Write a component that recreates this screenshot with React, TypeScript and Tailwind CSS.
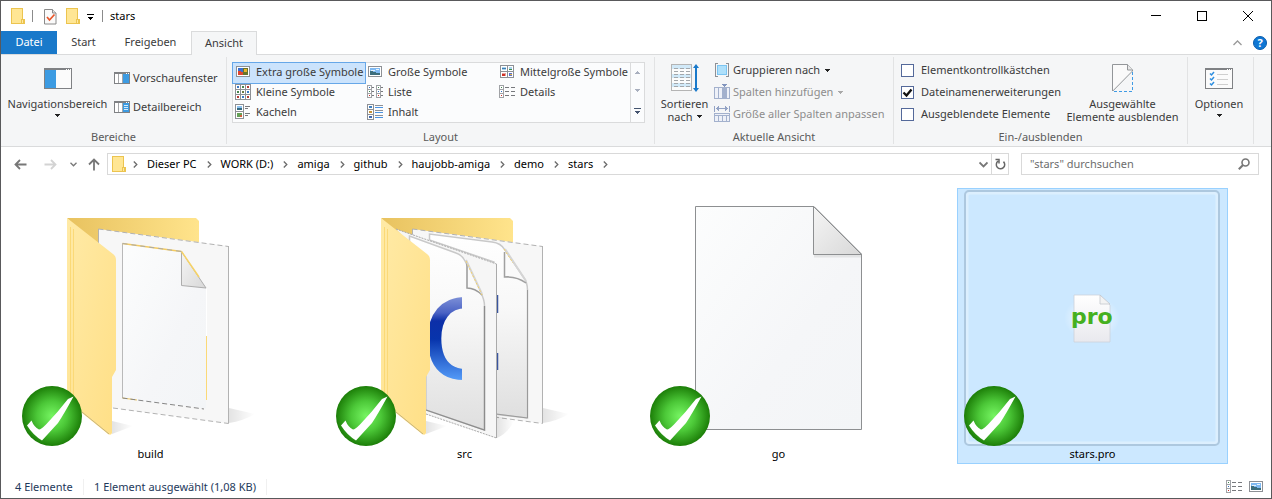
import React from "react";

type Children = { children?: React.ReactNode };

/* ---------- small glyphs ---------- */

const FolderIcon = () => (
  <svg width="14" height="17" viewBox="0 0 14 17" shapeRendering="crispEdges">
    <path d="M.5.5h10.5v11h2v4H.5z" fill="#ffe694" stroke="#ecc44f" />
    <path d="M10.5 15.5v-4h2v4z" fill="#ffe9a2" stroke="#ecc44f" />
  </svg>
);

const PropertiesIcon = () => (
  <svg width="13" height="17" viewBox="0 0 13 17">
    <path d="M.5 1.500h8l3.500 3.500v11H.5z" fill="#fafafa" stroke="#8a8a8a" />
    <path d="M8.500 1.500V5H12" fill="#e3e3e3" stroke="#8a8a8a" />
    <path d="M3 9l2.500 3L10.500 6.500" fill="none" stroke="#e8562a" strokeWidth="1.700" />
  </svg>
);

const Caret = ({ className = "fill-[#222]" }: { className?: string }) => (
  <svg width="5" height="3" viewBox="0 0 5 3" className={className} shapeRendering="crispEdges">
    <path d="M0 0h5v1H4v1H3v1H2V2H1V1H0z" />
  </svg>
);

const Chevron = () => (
  <svg width="5" height="7" viewBox="0 0 5 7" fill="none" stroke="#6b6b6b" strokeWidth="1.300">
    <path d="M.8.5l3 3-3 3" />
  </svg>
);

const WindowFrame = ({ children }: Children) => (
  <svg width="28" height="21" viewBox="0 0 28 21" shapeRendering="crispEdges">
    <rect x=".5" y=".5" width="27" height="20" fill="#fbfbfb" stroke="#7f8184" />
    <path d="M0 1h28" stroke="#7f8184" strokeWidth="2" />
    <path d="M22 1.500h1M24 1.500h1M26 1.500h1" stroke="#fff" />
    {children}
  </svg>
);

const NavPaneIcon = () => (
  <WindowFrame>
    <rect x="1" y="2" width="11" height="18" fill="#3c9be2" />
  </WindowFrame>
);

const OptionsIcon = () => (
  <WindowFrame>
    <path d="M12 6.500h11M12 11.500h11M12 16.500h11" stroke="#cfcfcf" />
    <g fill="none" stroke="#2f8fe0" strokeWidth="1.500" shapeRendering="auto">
      <path d="M5 5.500l1.500 1.500L9 4M5 10.500L6.500 12 9 9M5 15.500L6.500 17 9 14" />
    </g>
  </WindowFrame>
);

const PaneIcon = ({ detail = false }: { detail?: boolean }) => (
  <svg width="16" height="12" viewBox="0 0 16 12" shapeRendering="crispEdges">
    <rect x=".5" y=".5" width="15" height="11" fill="#fff" stroke="#7f8184" />
    <path d="M0 1h16" stroke="#7f8184" strokeWidth="2" />
    <path d="M12 1.500h1M14 1.500h1" stroke="#fff" />
    <path d="M4.500 2v9M8.500 2v9" stroke="#a5a7aa" />
    <rect x="9" y="2" width="6" height="9" fill="#3c9be2" />
    {detail && <path d="M10 4.500h4M10 6.500h4M10 8.500h4" stroke="#d5ebfb" />}
  </svg>
);

const PictureIcon = ({ vivid = false }: { vivid?: boolean }) => (
  <svg width="16" height="16" viewBox="0 0 16 16" shapeRendering="crispEdges">
    <rect x="1.500" y="2.500" width="13" height="10" fill="#fff" stroke="#8d9095" />
    {vivid ? (
      <>
        <path d="M3 4h10v7H3z" fill="#3b6fd0" />
        <path d="M3 7h3v1h2v3H3z" fill="#e2452e" />
        <path d="M8 4h5v7H8z" fill="#67742b" />
        <path d="M9 5h3v3H9z" fill="#e9b22c" />
      </>
    ) : (
      <>
        <path d="M3 4h10v7H3z" fill="#7fb9f2" />
        <path d="M4 6h4v1H4zM9 5h3v1H9z" fill="#e5f2fd" />
        <path d="M3 7h3v1h3v1h4v2H3z" fill="#3b6d7c" />
      </>
    )}
  </svg>
);

const MediumIcon = () => (
  <svg width="16" height="16" viewBox="0 0 16 16" shapeRendering="crispEdges">
    <path d="M1.500 1.500h13v12h-13zM8.500 1.500v12M1.500 7.500h13" fill="#fff" stroke="#8d9095" />
    <path d="M3 3h4v3H3z" fill="#a9d2ee" />
    <path d="M3 4h4v1H3z" fill="#3c7fb4" />
    <path d="M10 3h3v3h-3z" fill="#a9d2ee" />
    <path d="M10 5h3v1h-3z" fill="#3d8a4c" />
    <path d="M3 9h4v3H3z" fill="#e8a09a" />
    <path d="M3 10h3v2H3z" fill="#cf3127" />
    <path d="M10 9h3v3h-3z" fill="#5a6fd0" />
    <path d="M11 10h2v1h-2z" fill="#e5b431" />
  </svg>
);

const SmallIcon = () => (
  <svg width="16" height="16" viewBox="0 0 16 16" shapeRendering="crispEdges">
    <path d="M.5.5h15v15H.5zM5.500.5v15M10.500.5v15M.5 5.500h15M.5 10.500h15" fill="#fff" stroke="#8d9095" />
    <path d="M2 3h2M12 8h2M7 13h2" stroke="#3b78c4" strokeWidth="2" />
    <path d="M7 3h2M2 8h2" stroke="#47864f" strokeWidth="2" />
    <path d="M12 3h2M2 13h2M12 13h2" stroke="#b53a35" strokeWidth="2" />
    <path d="M7 8h2" stroke="#6d7842" strokeWidth="2" />
  </svg>
);

const ListIcon = () => (
  <svg width="16" height="16" viewBox="0 0 16 16" shapeRendering="crispEdges">
    <path d="M.5 1.500h4v12h-4zM.5 5.500h4M.5 9.500h4M9.500 1.500h4v12h-4zM9.500 5.500h4M9.500 9.500h4" fill="#fff" stroke="#a0a2a6" />
    <path d="M5 3.500h2M5 7.500h2M5 11.500h2M14 3.500h2M14 7.500h2M14 11.500h2" stroke="#77797d" />
    <path d="M2 3.500h1M11 7.500h1" stroke="#2c70c4" />
    <path d="M2 7.500h1M11 3.500h1" stroke="#3e8750" />
    <path d="M2 11.500h1M11 11.500h1" stroke="#c92f2a" />
  </svg>
);

const DetailsIcon = () => (
  <svg width="16" height="16" viewBox="0 0 16 16" shapeRendering="crispEdges">
    <path d="M.5 1.500h4v12h-4zM.5 5.500h4M.5 9.500h4" fill="#fff" stroke="#a0a2a6" />
    <path d="M6 3.500h4M12 3.500h4M6 7.500h4M12 7.500h4M6 11.500h4M12 11.500h4" stroke="#77797d" />
    <path d="M2 3.500h1" stroke="#3e8750" />
    <path d="M2 7.500h1" stroke="#2c70c4" />
    <path d="M2 11.500h1" stroke="#c92f2a" />
  </svg>
);

const TilesIcon = () => (
  <svg width="16" height="16" viewBox="0 0 16 16" shapeRendering="crispEdges">
    <path d="M.5.5h8v14h-8zM.5 7.500h8" fill="#fff" stroke="#8d9095" />
    <path d="M2 2h5v2H2z" fill="#8cc1ef" />
    <path d="M2 4h5v2H2z" fill="#356a80" />
    <path d="M2 9h5v4H2z" fill="#65a057" />
    <path d="M5 11h2v2H5z" fill="#d2603c" />
    <path d="M10 2.500h5M10 4.500h3M10 9.500h5M10 11.500h3" stroke="#77797d" />
  </svg>
);

const ContentIcon = () => (
  <svg width="16" height="16" viewBox="0 0 16 16" shapeRendering="crispEdges">
    <path d="M.5.5h6v15h-6zM.5 5.500h6M.5 10.500h6" fill="#fff" stroke="#8d9095" />
    <path d="M2 3h3" stroke="#3d7fc0" strokeWidth="2" />
    <path d="M2 8h3" stroke="#c69236" strokeWidth="2" />
    <path d="M2 13h3" stroke="#3d68b0" strokeWidth="2" />
    <path d="M8 3.500h8M8 8.500h8M8 13.500h8" stroke="#4a94e4" />
    <path d="M8 1.500h8M8 6.500h8M8 11.500h8" stroke="#8d9095" />
  </svg>
);

const SortIcon = () => (
  <svg width="28" height="28" viewBox="0 0 28 28">
    <g shapeRendering="crispEdges">
      <rect x=".5" y=".5" width="20" height="26" fill="#fcfcfc" stroke="#b4b4b4" />
      <path d="M1 3h19M1 12h19M1 21h19" stroke="#d1e9f8" strokeWidth="4" />
      <g stroke="#a3a7ab" strokeDasharray="4 2">
        <path d="M3 4.500h16M3 7.500h16M3 10.500h16M3 13.500h16M3 16.500h16M3 19.500h16M3 22.500h16" />
      </g>
    </g>
    <path d="M25 2v24" stroke="#1979ca" strokeWidth="2" />
    <path d="M22 4l3-4 3 4zM22 24l3 4 3-4z" fill="#1979ca" />
  </svg>
);

const GroupIcon = () => (
  <svg width="16" height="16" viewBox="0 0 16 16" shapeRendering="crispEdges">
    <path d="M4 1.500H1.500v13H4M12 1.500h2.500v13H12" fill="none" stroke="#8d9095" />
    <rect x="3.500" y="3.500" width="9" height="9" fill="#aee0fb" stroke="#7cc5f2" />
  </svg>
);

const AddColumnIcon = () => (
  <svg width="16" height="16" viewBox="0 0 16 16" shapeRendering="crispEdges">
    <path d="M.5 3.500h15v11H.5z" fill="#eef1f8" stroke="#a3b1cd" />
    <path d="M4.500 4v10M8.500 4v10M12.500 4v10" stroke="#a3b1cd" />
    <path d="M8 4h4v10H8z" fill="#a3b1cd" />
    <path d="M8 0h5v1h-1v1h-1v1h-1V2H9V1H8z" fill="#8194bd" />
  </svg>
);

const SizeColumnsIcon = () => (
  <svg width="16" height="16" viewBox="0 0 16 16" shapeRendering="crispEdges">
    <path d="M.5 0v6M15.500 0v6M2 2.500h12M3.500 1v3M4.500 0v5M11.500 0v5M12.500 1v3" stroke="#93a3c5" />
    <path d="M.5 7.500h15v8H.5z" fill="#eef1f8" stroke="#a3b1cd" />
    <path d="M.5 9.500h15M4.500 9v6M8.500 9v6M12.500 9v6" stroke="#a3b1cd" />
  </svg>
);

const HideItemsIcon = () => (
  <svg width="22" height="28" viewBox="0 0 22 28">
    <path d="M.5.5H15l6 6L.5 27z" fill="#fafafa" />
    <path d="M.5 27V.5H15.500l5 5.500v1L.8 27" fill="none" stroke="#939699" />
    <path d="M15.500.5V6h5" fill="#e8e8e8" stroke="#939699" />
    <path d="M20.500 8v19.500H1" fill="none" stroke="#3f9be5" strokeDasharray="3 2" />
  </svg>
);

/* ---------- large item pictures ---------- */

const Badge = () => (
  <svg className="absolute bottom-0 left-0" width="60" height="60" viewBox="0 0 60 60">
    <defs>
      <radialGradient id="badgeFill">
        <stop offset="0" stopColor="#76f562" />
        <stop offset=".5" stopColor="#4cc838" />
        <stop offset="1" stopColor="#1c7e08" />
      </radialGradient>
    </defs>
    <circle cx="30" cy="30" r="30" fill="url(#badgeFill)" />
    <path d="M5 39.500L9.500 34.500Q12 41 17 43.500Q19 43.500 24 38.500Q36 26 46 13L51.500 10.500Q42 28 36 37L20 54.500Q11 49 5 39.500z" fill="#fff" />
  </svg>
);

const FolderDefs = () => (
  <defs>
    <linearGradient id="folderBack" x1="0" x2="1">
      <stop offset="0" stopColor="#e8c25f" />
      <stop offset="1" stopColor="#ffe48c" />
    </linearGradient>
    <linearGradient id="folderFlap" x1="0" y1="0" x2="1" y2="1">
      <stop offset="0" stopColor="#ffeaa6" />
      <stop offset="1" stopColor="#ffdf86" />
    </linearGradient>
    <linearGradient id="shade" x1="0" x2="1">
      <stop offset="0" stopColor="#000" stopOpacity=".11" />
      <stop offset="1" stopColor="#000" stopOpacity="0" />
    </linearGradient>
    <linearGradient id="page" x1="0" y1="0" x2="1" y2="1">
      <stop offset="0" stopColor="#fcfdfd" />
      <stop offset=".6" stopColor="#f5f6f8" />
      <stop offset="1" stopColor="#f3f5f7" />
    </linearGradient>
    <linearGradient id="fold" x1="0" y1="0" x2="1" y2="1">
      <stop offset="0" stopColor="#f5f5f5" />
      <stop offset="1" stopColor="#d8d8d8" />
    </linearGradient>
    <linearGradient id="sourcePage" x1="0" y1="0" x2="0" y2="1">
      <stop offset="0" stopColor="#ffffff" />
      <stop offset=".4" stopColor="#f8f8f8" />
      <stop offset="1" stopColor="#dfdfdf" />
    </linearGradient>
    <linearGradient id="letter" gradientUnits="userSpaceOnUse" x1="0" y1="298" x2="0" y2="380">
      <stop offset="0" stopColor="#7a8dd6" />
      <stop offset=".18" stopColor="#4a62c4" />
      <stop offset=".28" stopColor="#0c2fa8" />
      <stop offset=".5" stopColor="#0734ac" />
      <stop offset="1" stopColor="#549bf8" />
    </linearGradient>
  </defs>
);

const FolderBack = () => <path d="M67 218h129l3 3v60H120z" fill="url(#folderBack)" />;

const FolderFlap = () => (
  <>
    <path d="M112 421l21 5-21 8z" fill="url(#shade)" />
    <path
      d="M67 218L113 254Q116 256 116 260V370L112 377V433Q111 436 108 434L67 401z"
      fill="url(#folderFlap)"
    />
    <path d="M70.500 227V402M73.500 229V404" stroke="#fbd977" />
    <path d="M82 412l27 22" stroke="#b9a878" strokeWidth=".8" />
  </>
);

const BuildPicture = () => (
  <svg width="256" height="256" viewBox="22 190 256 256">
    <FolderDefs />
    <FolderBack />
    <path d="M229 408l26 6q-12 7-26 9z" fill="url(#shade)" />
    <path d="M98.500 229L228.500 246V423.500L98.500 406z" fill="#f7f7f7" />
    <path d="M98.500 245V229M228.500 246V423.500" stroke="#b2b2b2" />
    <path d="M98.500 229L228.500 246.500M113 408L228.500 423.500" stroke="#b2b2b2" strokeDasharray="5 3" />
    <path d="M122.500 243.500L181.500 251.500L206 288V408.500L122.500 398z" fill="url(#page)" />
    <path d="M122.500 243.500V398" stroke="#b9b9b9" />
    <path d="M122.500 243.500L181.500 251.500" stroke="#f3cb62" strokeWidth="1.300" />
    <path d="M122.500 243.500L181.500 251.500" stroke="#aaa" strokeDasharray="5 4" />
    <path d="M181.500 251.500L206 288L181.500 285.500z" fill="url(#fold)" stroke="#adadad" />
    <path d="M181.500 251.500L199 277" stroke="#f7d366" strokeWidth="1.500" />
    <path d="M206.500 289V336" stroke="#fff" />
    <path d="M206.500 336V400" stroke="#fbd977" />
    <path d="M122.500 398L137 400" stroke="#f3cb62" />
    <path d="M122.500 398L204 409" stroke="#858585" strokeDasharray="5 3" />
    <FolderFlap />
  </svg>
);

const SourcePicture = () => (
  <svg width="256" height="256" viewBox="22 190 256 256">
    <FolderBack />
    <path d="M229 408l26 6q-12 7-26 9z" fill="url(#shade)" />
    <path d="M98.500 229L228.500 246V423.500L98.500 406z" fill="#f7f7f7" />
    <path d="M98.500 245V229M228.500 246V423.500" stroke="#b2b2b2" />
    <path d="M98.500 229L228.500 246.500M180 417L228.500 423.500" stroke="#b2b2b2" strokeDasharray="5 3" />
    <path
      d="M115.500 240V234L178 242Q187 243 191 250L210 278Q213.500 283 213.500 290V418L180 414V262z"
      fill="url(#sourcePage)"
      stroke="#c9c9c9"
      strokeWidth="1.500"
    />
    <path d="M213.500 290V418L182 414" fill="none" stroke="#9a9a9a" />
    <path d="M190.500 252V277Q203 276 212 283z" fill="#fafafa" />
    <path d="M190.500 252V277Q203 276 212 283" fill="none" stroke="#a0a0a0" strokeWidth="1.500" />
    <path d="M191 249l21 32" stroke="#d5d5d5" strokeWidth="2" />
    <path d="M190 249l9 14" stroke="#f7d366" strokeDasharray="2 2" />
    <path d="M183.500 295v18M183.500 353v17" stroke="#3a559f" strokeWidth="1.500" />
    <path d="M183 416l17 5q-6 12-17 17z" fill="url(#shade)" />
    <path d="M82 229L182.500 264V438L112 414V260z" fill="#f6f6f6" />
    <path d="M182.500 264V438" stroke="#aaa" />
    <path d="M82 229L182.500 264M112 414L182.500 438" stroke="#aaa" strokeDasharray="2 1" />
    <path
      d="M95.500 242V236L142 253Q148 255 151 261L167 293Q170.500 300 170.500 306V430L112 410V260z"
      fill="url(#sourcePage)"
      stroke="#c9c9c9"
      strokeWidth="1.500"
    />
    <path d="M170.500 306V430L112 410" fill="none" stroke="#8c8c8c" strokeWidth="1.300" />
    <path d="M153 263V288Q161 288 168 295z" fill="#fafafa" />
    <path d="M153 263V288Q161 288 168 295" fill="none" stroke="#999" strokeWidth="1.500" />
    <path d="M152 260l16 34" stroke="#d5d5d5" strokeWidth="2" />
    <path d="M152 261l16 34" stroke="#f7d366" strokeDasharray="2 2" />
    <clipPath id="letterClip">
      <rect x="116" y="290" width="32" height="100" />
    </clipPath>
    <g clipPath="url(#letterClip)">
      <text
        x="107"
        y="379"
        fill="url(#letter)"
        className="font-['Open_Sans',sans-serif] text-[112px] font-semibold"
      >
        C
      </text>
    </g>
    <FolderFlap />
  </svg>
);

const BlankPicture = () => (
  <svg width="256" height="256" viewBox="22 190 256 256">
    <path d="M67.500 206.500H186L233.500 254V429.500H67.500z" fill="url(#page)" stroke="#8d8f91" />
    <path d="M186 256H233" stroke="#e3e4e5" strokeWidth="3" />
    <path d="M185.500 206.500L233.500 254.500H185.500z" fill="url(#fold)" stroke="#8d8f91" />
  </svg>
);

const ProPicture = () => (
  <svg width="256" height="256" viewBox="22 190 256 256">
    <defs>
      <radialGradient id="glow">
        <stop offset="0" stopColor="#fff" />
        <stop offset="1" stopColor="#fff" stopOpacity="0" />
      </radialGradient>
      <linearGradient id="proPage" x1="0" y1="0" x2="0" y2="1">
        <stop offset="0" stopColor="#fff" />
        <stop offset="1" stopColor="#e9e9ee" />
      </linearGradient>
    </defs>
    <rect x="25" y="193" width="250" height="250" rx="3" fill="none" stroke="#dceffe" strokeWidth="3" />
    <rect x="23" y="191" width="254" height="254" rx="4" fill="none" stroke="#adc8df" strokeWidth="2" />
    <ellipse cx="150" cy="318" rx="28" ry="22" fill="url(#glow)" />
    <path d="M132 295h26l10 10v37h-36z" fill="url(#proPage)" stroke="#cdd2da" strokeWidth=".8" />
    <path d="M158 295v9h10z" fill="#f3f3f3" stroke="#c3c7cd" strokeWidth=".8" />
    <text
      x="129"
      y="324"
      fill="#45b020"
      className="font-['DejaVu_Sans',sans-serif] text-[22px] font-bold"
    >
      pro
    </text>
  </svg>
);

/* ---------- ribbon pieces ---------- */

const Group = ({ label, className, children }: Children & { label: string; className: string }) => (
  <section aria-label={label || "Optionen"} className={`my-[2px] flex shrink-0 flex-col border-r border-[#e2e3e4] ${className}`}>
    <div className="flex h-[74px]">{children}</div>
    <div className="text-center leading-[14px] text-[#5a5a5a]">{label}</div>
  </section>
);

const BigButton = ({ icon, lines, caret, className }: { icon: React.ReactNode; lines: string[]; caret?: "below" | "inline"; className: string }) => (
  <button className={`flex shrink-0 flex-col items-center whitespace-nowrap pt-[6px] leading-[13px] ${className}`}>
    <span className="flex h-[34px] items-center pb-1">{icon}</span>
    {lines.map((line, i) => (
      <span key={line} className="flex items-center gap-1">
        {line}
        {caret === "inline" && i === lines.length - 1 && <Caret />}
      </span>
    ))}
    {caret === "below" && (
      <span className="pt-1">
        <Caret />
      </span>
    )}
  </button>
);

const SmallButton = ({ icon, label, caret, disabled }: { icon: React.ReactNode; label: string; caret?: boolean; disabled?: boolean }) => (
  <button disabled={disabled} className="flex h-[22px] items-center gap-[3px] whitespace-nowrap disabled:text-[#8d8d8d]">
    {icon}
    <span>{label}</span>
    {caret && (
      <span className="pl-[2px]">
        <Caret className={disabled ? "fill-[#a9a9a9]" : "fill-[#222]"} />
      </span>
    )}
  </button>
);

const layouts: { label: string; icon: React.ReactNode }[] = [
  { label: "Extra große Symbole", icon: <PictureIcon vivid /> },
  { label: "Große Symbole", icon: <PictureIcon /> },
  { label: "Mittelgroße Symbole", icon: <MediumIcon /> },
  { label: "Kleine Symbole", icon: <SmallIcon /> },
  { label: "Liste", icon: <ListIcon /> },
  { label: "Details", icon: <DetailsIcon /> },
  { label: "Kacheln", icon: <TilesIcon /> },
  { label: "Inhalt", icon: <ContentIcon /> },
];

const Check = ({ label, checked }: { label: string; checked?: boolean }) => (
  <label className="flex h-[22px] items-center gap-[7px] whitespace-nowrap">
    <span className="relative flex">
      <input type="checkbox" defaultChecked={checked} className="peer size-[13px] appearance-none border border-[#54699a] bg-white" />
      <svg className="pointer-events-none absolute inset-0 hidden peer-checked:block" width="13" height="13" viewBox="0 0 13 13">
        <path d="M2.500 6.500l3 3L10.500 3.500" fill="none" stroke="#111" strokeWidth="2.300" />
      </svg>
    </span>
    {label}
  </label>
);

const crumbs = ["Dieser PC", "WORK (D:)", "amiga", "github", "haujobb-amiga", "demo", "stars"];

const files: { name: string; picture: React.ReactNode; selected?: boolean }[] = [
  { name: "build", picture: <BuildPicture /> },
  { name: "src", picture: <SourcePicture /> },
  { name: "go", picture: <BlankPicture /> },
  { name: "stars.pro", picture: <ProPicture />, selected: true },
];

export default function App() {
  return (
    <div className="flex min-h-screen flex-col overflow-hidden border border-[#59595b] bg-white font-['Noto_Sans','Open_Sans',sans-serif] text-[11px] text-[#3b3b3b]">
      <header className="flex h-[30px] items-center pl-[10px] text-black">
        <FolderIcon />
        <span className="ml-[7px] h-[12px] w-px bg-[#8b8b8b]" />
        <button aria-label="Eigenschaften" className="ml-[11px]">
          <PropertiesIcon />
        </button>
        <button aria-label="Neuer Ordner" className="ml-[9px]">
          <FolderIcon />
        </button>
        <button aria-label="Symbolleiste anpassen" className="ml-[7px] pt-[2px]">
          <svg width="7" height="6" viewBox="0 0 7 6" shapeRendering="crispEdges">
            <path d="M0 0h7v1H0zM1 3h5v1H5v1H4v1H3V5H2V4H1z" />
          </svg>
        </button>
        <span className="ml-[8px] h-[12px] w-px bg-[#8b8b8b]" />
        <h1 className="ml-[7px]">stars</h1>
        <div className="ml-auto flex h-full">
          <button aria-label="Minimieren" className="flex w-[46px] items-center justify-center">
            <svg width="10" height="10" viewBox="0 0 10 10" stroke="#000" shapeRendering="crispEdges">
              <path d="M0 4.500h10" />
            </svg>
          </button>
          <button aria-label="Maximieren" className="flex w-[46px] items-center justify-center">
            <svg width="10" height="10" viewBox="0 0 10 10" stroke="#000" fill="none" shapeRendering="crispEdges">
              <path d="M.5.5h9v9h-9z" />
            </svg>
          </button>
          <button aria-label="Schließen" className="flex w-[46px] items-center justify-center">
            <svg width="10" height="10" viewBox="0 0 10 10" stroke="#000">
              <path d="M0 0l10 10M10 0L0 10" />
            </svg>
          </button>
        </div>
      </header>

      <nav className="flex h-[24px] border-b border-[#dadbdc]">
        <button className="w-[56px] bg-[#1979ca] text-white">Datei</button>
        <button className="w-[53px]">Start</button>
        <button className="w-[81px]">Freigeben</button>
        <button className="-mb-px w-[66px] border border-b-0 border-[#dadbdc] bg-[#f5f6f7]">Ansicht</button>
        <div className="ml-auto flex items-center gap-[11px] pr-[4px]">
          <button aria-label="Menüband minimieren">
            <svg width="9" height="6" viewBox="0 0 9 6" fill="none" stroke="#999" strokeWidth="1.300">
              <path d="M.5 5l4-4 4 4" />
            </svg>
          </button>
          <button aria-label="Hilfe">
            <svg width="14" height="14" viewBox="0 0 14 14">
              <circle cx="7" cy="7" r="6.500" fill="#0f77d4" stroke="#0b5cab" />
              <text x="7" y="11" textAnchor="middle" fill="#fff" className="text-[11px] font-bold">
                ?
              </text>
            </svg>
          </button>
        </div>
      </nav>

      <div className="flex h-[92px] border-b border-[#dadbdc] bg-[#f5f6f7]">
        <Group label="Bereiche" className="w-[226px]">
          <BigButton className="w-[113px]" icon={<NavPaneIcon />} lines={["Navigationsbereich"]} caret="below" />
          <div className="flex flex-col gap-[7px] pt-[10px]">
            <SmallButton icon={<PaneIcon />} label="Vorschaufenster" />
            <SmallButton icon={<PaneIcon detail />} label="Detailbereich" />
          </div>
        </Group>

        <Group label="Layout" className="w-[428px]">
          <div className="ml-[5px] mt-[5px] flex h-[61px] w-[413px] border border-[#dadbdc] bg-[#fbfcfd]">
            <div className="grid flex-1 grid-cols-[132px_132px_132px] content-start">
              {layouts.map((l, i) => (
                <button
                  key={l.label}
                  className={
                    i === 0
                      ? "flex h-[20px] items-center gap-[5px] whitespace-nowrap bg-[#cbe3fc] pb-[2px] pl-[2px] outline outline-[#66a7e8]"
                      : "flex h-[20px] items-center gap-[5px] whitespace-nowrap pb-[2px] pl-[2px]"
                  }
                >
                  {l.icon}
                  {l.label}
                </button>
              ))}
            </div>
            <div className="flex w-[14px] flex-col items-center justify-around border-l border-[#dadbdc]">
              <button aria-label="Nach oben" className="rotate-180">
                <Caret className="fill-[#a9b0bf]" />
              </button>
              <button aria-label="Nach unten">
                <Caret className="fill-[#a9b0bf]" />
              </button>
              <button aria-label="Mehr">
                <svg width="7" height="6" viewBox="0 0 7 6" fill="#44546f" shapeRendering="crispEdges">
                  <path d="M0 0h7v1H0zM1 3h5v1H5v1H4v1H3V5H2V4H1z" />
                </svg>
              </button>
            </div>
          </div>
        </Group>

        <Group label="Aktuelle Ansicht" className="w-[239px]">
          <BigButton className="w-[59px]" icon={<SortIcon />} lines={["Sortieren", "nach"]} caret="inline" />
          <div className="flex flex-col pt-[2px]">
            <SmallButton icon={<GroupIcon />} label="Gruppieren nach" caret />
            <SmallButton icon={<AddColumnIcon />} label="Spalten hinzufügen" caret disabled />
            <SmallButton icon={<SizeColumnsIcon />} label="Größe aller Spalten anpassen" disabled />
          </div>
        </Group>

        <Group label="Ein-/ausblenden" className="w-[294px]">
          <div className="flex w-[166px] shrink-0 flex-col pl-[7px] pt-[2px]">
            <Check label="Elementkontrollkästchen" />
            <Check label="Dateinamenerweiterungen" checked />
            <Check label="Ausgeblendete Elemente" />
          </div>
          <BigButton className="w-[125px]" icon={<HideItemsIcon />} lines={["Ausgewählte", "Elemente ausblenden"]} />
        </Group>

        <Group label="" className="w-[66px]">
          <BigButton className="w-[62px]" icon={<OptionsIcon />} lines={["Optionen"]} caret="below" />
        </Group>
      </div>

      <div className="flex items-center py-[6px] pl-[13px] pr-[12px]">
        <div className="flex w-[93px] items-center">
          <button aria-label="Zurück">
            <svg width="13" height="11" viewBox="0 0 13 11" fill="none" stroke="#777" strokeWidth="1.800">
              <path d="M12.500 5.500H1.500M6 1L1.500 5.500 6 10" />
            </svg>
          </button>
          <button aria-label="Vorwärts" className="ml-[17px]">
            <svg width="13" height="11" viewBox="0 0 13 11" fill="none" stroke="#d3d3d3" strokeWidth="1.800">
              <path d="M.5 5.500h11M7 1l4.500 4.500L7 10" />
            </svg>
          </button>
          <button aria-label="Zuletzt besucht" className="ml-[13px]">
            <svg width="7" height="5" viewBox="0 0 7 5" fill="none" stroke="#777" strokeWidth="1.300">
              <path d="M.5.800l3 3 3-3" />
            </svg>
          </button>
          <button aria-label="Nach oben" className="ml-[11px]">
            <svg width="12" height="13" viewBox="0 0 12 13" fill="none" stroke="#777" strokeWidth="1.800">
              <path d="M6 12.500V1.500M1 6.500l5-5 5 5" />
            </svg>
          </button>
        </div>
        <div className="flex h-[22px] flex-1 items-center border border-[#d9d9d9] pl-[4px] text-black">
          <FolderIcon />
          <span className="ml-[7px]">
            <Chevron />
          </span>
          {crumbs.map((c) => (
            <React.Fragment key={c}>
              <button className="ml-[9px] mr-[10px] whitespace-nowrap">{c}</button>
              <Chevron />
            </React.Fragment>
          ))}
          <button aria-label="Verlauf" className="ml-auto mr-[3px]">
            <svg width="9" height="7" viewBox="0 0 9 7" fill="none" stroke="#777" strokeWidth="1.800">
              <path d="M.5 1.500l4 4 4-4" />
            </svg>
          </button>
          <button aria-label="Aktualisieren" className="flex h-full w-[17px] items-center justify-center border-l border-[#d9d9d9]">
            <svg width="11" height="12" viewBox="0 0 11 12" fill="none" stroke="#666" strokeWidth="1.500">
              <path d="M3 3.200A4.200 4.200 0 1 0 8.500 3.600M.5 1.500H4V5.500" />
            </svg>
          </button>
        </div>
        <label className="ml-[12px] flex h-[22px] w-[238px] items-center border border-[#d9d9d9] px-[8px]">
          <input type="search" aria-label="Suchen" placeholder={'"stars" durchsuchen'} className="min-w-0 flex-1 outline-none placeholder:text-[#6d6d6d]" />
          <svg width="12" height="12" viewBox="0 0 12 12" fill="none" stroke="#777" strokeWidth="1.600">
            <circle cx="7.500" cy="4.500" r="3.500" />
            <path d="M5 7L.8 11.200" strokeWidth="2" />
          </svg>
        </label>
      </div>

      <main className="flex flex-1 flex-wrap content-start gap-x-[43px] pl-[14px] pt-[7px]">
        {files.map((f) => (
          <button
            key={f.name}
            className={
              f.selected
                ? "flex h-[276px] w-[271px] flex-col border border-[#99d1ff] bg-[#cce8ff] pt-[1px] leading-[16px] text-black"
                : "flex h-[276px] w-[271px] flex-col border border-transparent pt-[1px] leading-[16px] text-black"
            }
          >
            <span className="relative ml-[6px] block size-[256px]">
              {f.picture}
              <Badge />
            </span>
            <span className="self-stretch text-center">{f.name}</span>
          </button>
        ))}
      </main>

      <footer className="flex h-[22px] items-center pl-[14px] pr-[7px] text-[#1e395b]">
        <span className="w-[69px] border-r border-[#f0f0f0]">4 Elemente</span>
        <span className="border-r border-[#f0f0f0] px-[10px]">1 Element ausgewählt (1,08 KB)</span>
        <span className="ml-auto flex items-center gap-[6px]">
          <button aria-label="Details">
            <DetailsIcon />
          </button>
          <button aria-label="Große Symbole">
            <PictureIcon />
          </button>
        </span>
      </footer>
    </div>
  );
}
